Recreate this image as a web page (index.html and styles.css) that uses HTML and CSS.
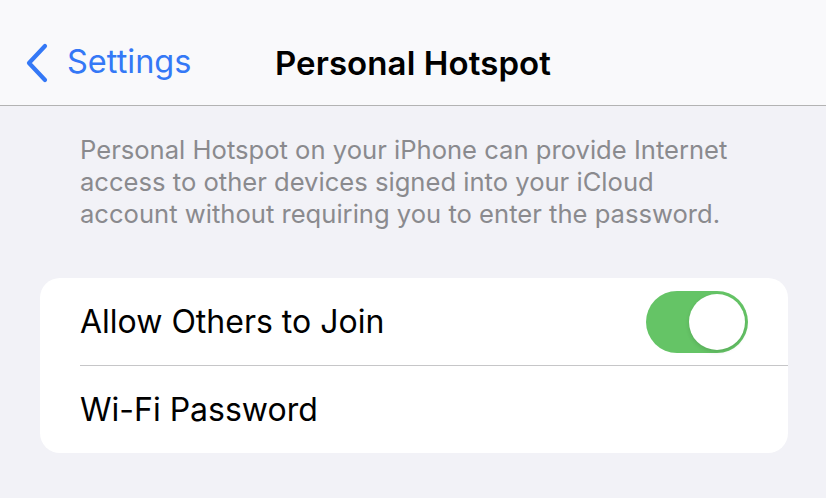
FILE: index.html
```html
<!DOCTYPE html>
<html lang="en">
<head>
  <meta charset="UTF-8" />
  <meta name="viewport" content="width=device-width, initial-scale=1.0"/>
  <title>Personal Hotspot</title>
  <link rel="stylesheet" href="styles.css">
</head>
<body>
  <header class="navbar">
    <a class="back" href="#">
      <svg class="chevron" width="22" height="40" viewBox="0 0 22 40">
        <path d="M19 3 L3 20 L19 37" fill="none" stroke="#3478f6" stroke-width="4.2" stroke-linecap="round" stroke-linejoin="round"/>
      </svg>
      <span>Settings</span>
    </a>
    <h1 class="title">Personal Hotspot</h1>
    <div></div>
  </header>

  <p class="note">Personal Hotspot on your iPhone can provide Internet<br>access to other devices signed into your iCloud<br>account without requiring you to enter the password.</p>

  <div class="group">
    <div class="row">
      <span class="label">Allow Others to Join</span>
      <label class="switch">
        <input type="checkbox" checked>
        <span class="knob"></span>
      </label>
    </div>
    <div class="row">
      <span class="label">Wi-Fi Password</span>
    </div>
  </div>
</body>
</html>
```

FILE: styles.css
```css
body { margin:0; background:#f2f2f7; font-family: Inter, "Liberation Sans", Arial, sans-serif; color:#000; }

.navbar { display:grid; grid-template-columns:1fr auto 1fr; align-items:center; height:85px; padding-top:20px; background:#f9f9fb; border-bottom:1px solid #b3b3b3; }
.back { display:flex; align-items:center; gap:19px; padding-left:26px; color:#3478f6; text-decoration:none; font-size:32.5px; }
.back span { position:relative; top:-1px; }
.chevron { display:block; }
.title { margin:0; font-size:33px; font-weight:600; letter-spacing:0.1px; }

.note { margin:28px 0 0; padding:0 70px 0 80px; font-size:25.6px; line-height:32px; color:#8a8a8e; }

.group { margin:48px 38px 0 40px; background:#fff; border-radius:20px; overflow:hidden; }
.row { display:flex; align-items:center; justify-content:space-between; height:87px; margin-left:40px; padding-right:40px; font-size:32px; }
.row + .row { border-top:1px solid #c6c6c8; }

.switch { position:relative; display:block; width:102px; height:62px; }
.switch input { display:none; }
.switch .knob { position:absolute; inset:0; background:#65c466; border-radius:31px; }
.switch .knob::after { content:""; position:absolute; top:3px; right:3px; width:56px; height:56px; border-radius:50%; background:#fff; box-shadow:0 2px 4px rgba(0,0,0,0.12); }
```
